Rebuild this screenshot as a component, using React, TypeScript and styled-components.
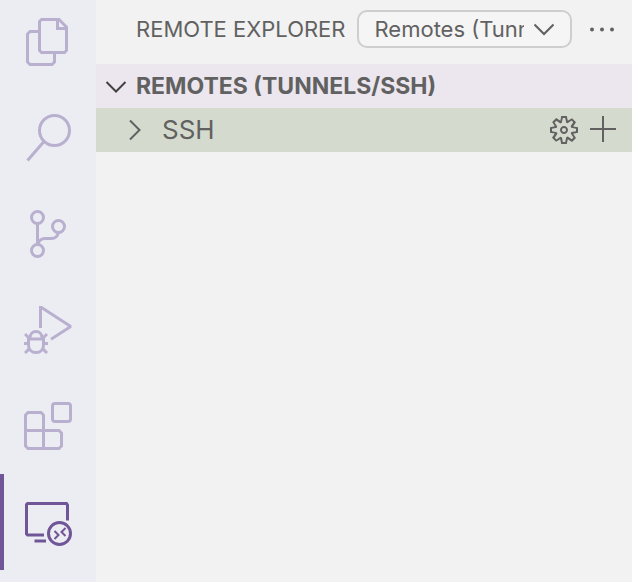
import React from "react";
import styled, { createGlobalStyle } from "styled-components";

const GlobalStyle = createGlobalStyle`
  * { box-sizing: border-box; }
  body {
    margin: 0;
    background: #f2f2f2;
    color: #616161;
    font-family: Inter, "Liberation Sans", sans-serif;
  }
  button, select {
    margin: 0;
    padding: 0;
    border: 0;
    background: none;
    color: inherit;
    font-family: inherit;
  }
`;

const Layout = styled.div`
  display: flex;
  min-height: 100vh;
`;

const ActivityBar = styled.nav`
  flex: none;
  width: 96px;
  background: #ecedf3;
  overflow: hidden;
`;

const ActivityList = styled.div`
  display: flex;
  flex-direction: column;
  margin-top: -6px;
`;

const ActivityButton = styled.button<{ $active?: boolean }>`
  display: flex;
  align-items: center;
  justify-content: center;
  height: 96px;
  color: ${(p) => (p.$active ? "#705697" : "#b9b0d0")};
  box-shadow: ${(p) => (p.$active ? "inset 4px 0 #705697" : "none")};
`;

const ActivityIcon = styled.svg`
  width: 48px;
  height: 48px;
  fill: none;
  stroke: currentColor;
  stroke-width: 3;
`;

const SideBar = styled.main`
  flex: 1;
  min-width: 0;
`;

const TitleBar = styled.header`
  display: flex;
  align-items: center;
  height: 64px;
  padding: 0 16px 6px 40px;
`;

const Title = styled.h1`
  flex: none;
  margin: 0;
  font-size: 22px;
  font-weight: 400;
  line-height: 28px;
  white-space: nowrap;
`;

const Picker = styled.div`
  display: grid;
  flex: 1;
  align-items: center;
  min-width: 0;
  margin: 0 17px 0 11px;
`;

const PickerSelect = styled.select`
  grid-area: 1 / 1;
  appearance: none;
  width: 100%;
  height: 38px;
  padding: 0 46px 0 16px;
  border: 2px solid #cecece;
  border-radius: 10px;
  background: #f5f5f5;
  font-size: 22px;
  line-height: 28px;
`;

const PickerArrow = styled.span`
  display: flex;
  grid-area: 1 / 1;
  justify-self: end;
  margin-right: 18px;
  pointer-events: none;
`;

const Glyph = styled.svg<{ $size: number }>`
  flex: none;
  width: ${(p) => p.$size}px;
  height: ${(p) => p.$size}px;
  fill: none;
  stroke: currentColor;
  stroke-width: 2;
`;

const IconButton = styled.button`
  display: flex;
  flex: none;
`;

const SectionHeader = styled.button`
  display: flex;
  align-items: center;
  gap: 8px;
  width: 100%;
  height: 44px;
  padding: 0 8px;
  background: #ece7ee;
  font-size: 23px;
  font-weight: 700;
  line-height: 28px;
  white-space: nowrap;
`;

const TreeRow = styled.div`
  display: flex;
  align-items: center;
  height: 44px;
  padding: 0 15px 0 26px;
  background: #d4dbce;
`;

const TreeToggle = styled.button`
  display: flex;
  flex: 1;
  align-items: center;
  gap: 16px;
  font-size: 26px;
  line-height: 32px;
`;

const RowActions = styled.div`
  display: flex;
  align-items: center;
  gap: 9px;
`;

const activities = [
  {
    label: "Explorer",
    art: (
      <>
        <path d="M14 13.5H6L3.5 16V44L6 46.5H28L30.5 44V36" />
        <path d="M17.5 1.5H35L42.5 9V32.5L40.5 34.5H17.5L15.5 32.5V3.5Z" />
        <path d="M33.5 1.5V10.5H42.5" />
      </>
    ),
  },
  {
    label: "Search",
    art: (
      <>
        <circle cx="30.5" cy="16.5" r="15" />
        <path d="M20 27.5L3.5 46.5" />
      </>
    ),
  },
  {
    label: "Source Control",
    art: (
      <>
        <circle cx="13.5" cy="7.5" r="6" />
        <circle cx="34.5" cy="16.5" r="6" />
        <circle cx="13.5" cy="40.5" r="6" />
        <path d="M13.5 13.5V34.5M34.5 22.5C33.5 26.5 31.5 28.5 27.5 28.5H21C17.5 28.5 15 30.5 14 34" />
      </>
    ),
  },
  {
    label: "Run and Debug",
    art: (
      <>
        <path d="M16.5 22V1.5H17.5L46 20V21L27 33.3" />
        <path d="M6 32C6 28 8.5 25.5 12 25.5S18 28 18 32M4.5 33H19.5V39C19.5 43.5 16.5 46.5 12 46.5S4.5 43.5 4.5 39Z" />
        <path d="M1 28L5 32M23 28L19 32M0 37.5H4M20 37.5H24M1 47L6 42M23 47L18 42" />
      </>
    ),
  },
  {
    label: "Extensions",
    art: (
      <>
        <rect x="28.5" y="1.5" width="18" height="18" rx="2.5" />
        <path d="M4 10.5H17L19.5 13V28.5H35L37.5 31V44L35 46.5H4L1.5 44V13Z" />
        <path d="M1.5 28.5H19.5V46.5" />
      </>
    ),
  },
  {
    label: "Remote Explorer",
    active: true,
    art: (
      <>
        <path d="M43.5 22.5V7L42.5 5.5H3.5L2.5 6.5V36L3.5 37H20" />
        <path d="M10.5 43H22" />
        <circle cx="35.5" cy="35.5" r="11" />
        <path strokeWidth="2" d="M30.5 33L34.5 37L30.5 41M41.5 30L37.5 34L41.5 38" />
      </>
    ),
  },
];

export default function App() {
  return (
    <>
      <GlobalStyle />
      <Layout>
        <ActivityBar aria-label="Views">
          <ActivityList>
            {activities.map(({ label, active, art }) => (
              <ActivityButton key={label} type="button" aria-label={label} $active={active}>
                <ActivityIcon viewBox="0 0 48 48" aria-hidden="true">
                  {art}
                </ActivityIcon>
              </ActivityButton>
            ))}
          </ActivityList>
        </ActivityBar>
        <SideBar>
          <TitleBar>
            <Title>REMOTE EXPLORER</Title>
            <Picker>
              <PickerSelect aria-label="Remote type">
                <option>Remotes (Tunnels/SSH)</option>
              </PickerSelect>
              <PickerArrow>
                <Glyph $size={20} viewBox="0 0 20 20" aria-hidden="true">
                  <path d="M0.5 5.5L10 15L19.5 5.5" />
                </Glyph>
              </PickerArrow>
            </Picker>
            <IconButton type="button" aria-label="More actions">
              <Glyph $size={27} viewBox="0 0 27 27" aria-hidden="true">
                <g fill="currentColor" stroke="none">
                  <circle cx="3" cy="13.5" r="2" />
                  <circle cx="13" cy="13.5" r="2" />
                  <circle cx="23" cy="13.5" r="2" />
                </g>
              </Glyph>
            </IconButton>
          </TitleBar>
          <SectionHeader type="button" aria-expanded="true">
            <Glyph $size={24} viewBox="0 0 24 24" aria-hidden="true">
              <path stroke="#424242" d="M2.5 8L12 17.5L21.5 8" />
            </Glyph>
            REMOTES (TUNNELS/SSH)
          </SectionHeader>
          <TreeRow>
            <TreeToggle type="button" aria-expanded="false">
              <Glyph $size={24} viewBox="0 0 24 24" aria-hidden="true">
                <path d="M8 2.5L17.5 12L8 21.5" />
              </Glyph>
              SSH
            </TreeToggle>
            <RowActions>
              <IconButton type="button" aria-label="Configure">
                <Glyph $size={32} viewBox="0 0 16 16" aria-hidden="true">
                  <path
                    fill="currentColor"
                    stroke="none"
                    fillRule="evenodd"
                    d="M9.1 4.4L8.6 2H7.4l-.5 2.4-.7.3-2-1.3-.9.8 1.3 2-.2.7-2.4.5v1.2l2.4.5.3.8-1.3 2 .8.8 2-1.3.8.3.4 2.3h1.2l.5-2.4.8-.3 2 1.3.8-.8-1.3-2 .3-.8 2.3-.4V7.4l-2.4-.5-.3-.8 1.3-2-.8-.8-2 1.3-.7-.2zM9.4 1l.5 2.4L12 2.1l2 2-1.4 2.1 2.4.4v2.8l-2.4.5L14 12l-2 2-2.1-1.4-.5 2.4H6.6l-.5-2.4L4 13.9l-2-2 1.4-2.1L1 9.4V6.6l2.4-.5L2.1 4l2-2 2.1 1.4.4-2.4h2.8zm.6 7c0 1.1-.9 2-2 2s-2-.9-2-2 .9-2 2-2 2 .9 2 2zM8 9c.6 0 1-.4 1-1s-.4-1-1-1-1 .4-1 1 .4 1 1 1z"
                  />
                </Glyph>
              </IconButton>
              <IconButton type="button" aria-label="New remote">
                <Glyph $size={28} viewBox="0 0 28 28" aria-hidden="true">
                  <path d="M14 0V26M1 13H27" />
                </Glyph>
              </IconButton>
            </RowActions>
          </TreeRow>
        </SideBar>
      </Layout>
    </>
  );
}
